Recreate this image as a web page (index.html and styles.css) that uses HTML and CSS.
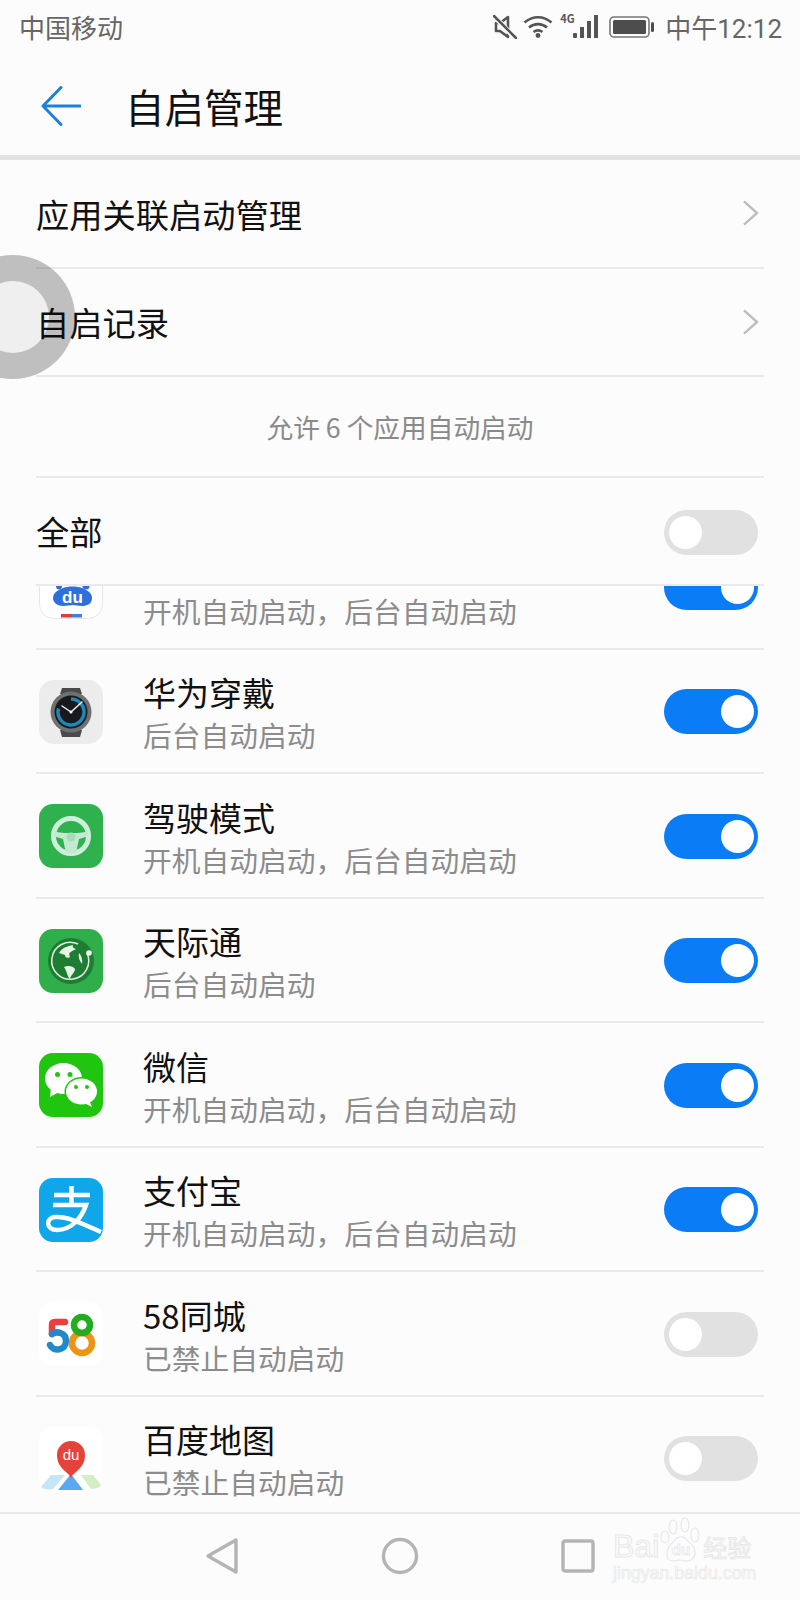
FILE: index.html
```html
<!DOCTYPE html>
<html lang="zh-CN">
<head>
    <meta charset="UTF-8">
    <title>自启管理</title>
    <link rel="stylesheet" href="styles.css">
</head>
<body>
    <div class="phone">
        <div class="status-bar">
            <span class="carrier">中国移动</span>
            <div class="status-icons">
                <svg class="icon-mute" viewBox="0 0 24 24" width="24" height="24">
                    <path d="M3 8h4l8-6v20l-8-6H3z" fill="none" stroke="#555" stroke-width="2.6" stroke-linejoin="round"/>
                    <path d="M2 2l20 21" stroke="#fdfdfd" stroke-width="5"/>
                    <path d="M1 1l22 22" stroke="#555" stroke-width="2.6" stroke-linecap="round"/>
                </svg>
                <svg class="icon-wifi" viewBox="0 0 30 23" width="30" height="23">
                    <path d="M1.5 7.5c8-7 19-7 27 0M6 12.5c5.500-4.500 12.500-4.500 18 0M10.500 17c2.800-2 6.200-2 9 0" fill="none" stroke="#555" stroke-width="2.6"/>
                    <circle cx="15" cy="20.500" r="2.400" fill="#555"/>
                </svg>
                <div class="signal">
                    <span class="net">4G</span>
                    <svg viewBox="0 0 26 23" width="26" height="23">
                        <rect x="0" y="18" width="4" height="5" rx="1" fill="#555"/>
                        <rect x="7" y="12" width="4" height="11" fill="#555"/>
                        <rect x="14" y="6" width="4" height="17" fill="#555"/>
                        <rect x="21" y="0" width="4" height="23" fill="#555"/>
                    </svg>
                </div>
                <svg class="icon-battery" viewBox="0 0 46 22" width="46" height="22">
                    <rect x="1" y="1" width="39" height="20" rx="4" fill="none" stroke="#777" stroke-width="1.600"/>
                    <rect x="4" y="4" width="33" height="14" rx="1.500" fill="#4d4d4d"/>
                    <rect x="42" y="6" width="3" height="10" rx="1.500" fill="#4d4d4d"/>
                </svg>
                <span class="clock">中午12:12</span>
            </div>
        </div>

        <header class="toolbar">
            <svg class="back" viewBox="0 0 40 40" width="40" height="40">
                <path d="M20 1.500L2 20l18 18.500M2 20h37" fill="none" stroke="#1f80d8" stroke-width="3" stroke-linecap="round" stroke-linejoin="round"/>
            </svg>
            <h1>自启管理</h1>
        </header>

        <div class="section">
            <div class="link-row">
                <span>应用关联启动管理</span>
                <svg class="chevron" viewBox="0 0 18 28" width="17" height="26"><path d="M2 1.500L16 14 2 26.500" fill="none" stroke="#bdbdbd" stroke-width="2.600"/></svg>
            </div>
            <div class="link-row">
                <span>自启记录</span>
                <svg class="chevron" viewBox="0 0 18 28" width="17" height="26"><path d="M2 1.500L16 14 2 26.500" fill="none" stroke="#bdbdbd" stroke-width="2.600"/></svg>
            </div>
            <div class="notice">允许 6 个应用自动启动</div>
            <div class="link-row">
                <span>全部</span>
                <div class="toggle"></div>
            </div>
        </div>

        <div class="app-viewport">
            <div class="app-list">
                <div class="app-row">
                    <svg class="app-icon" viewBox="0 0 64 64">
                        <rect x="0.500" y="0.500" width="63" height="63" rx="14" fill="#fff" stroke="#e6e6e6"/>
                        <ellipse cx="20" cy="31" rx="3" ry="3.500" fill="#2f6fdc"/>
                        <ellipse cx="47" cy="31" rx="3.500" ry="3.500" fill="#2f6fdc"/>
                        <path d="M14 43c0-6 6-8 10-10 5-2 14-2 19 0 4 2 10 4 10 10 0 6-5 8-10 8-4 0-7-1-9-1s-6 1-10 1c-5 0-10-3-10-8z" fill="#2f6fdc"/>
                        <text x="33.500" y="48" class="du-text">du</text>
                        <rect x="22" y="59" width="11" height="3.500" fill="#e0393e"/>
                        <rect x="33" y="59" width="10" height="3.500" fill="#3f7fe0"/>
                    </svg>
                    <div class="app-text"><div class="app-name"></div><div class="app-desc">开机自动启动，后台自动启动</div></div>
                    <div class="toggle on"></div>
                </div>
                <div class="app-row">
                    <svg class="app-icon" viewBox="0 0 64 64">
                        <rect width="64" height="64" rx="15" fill="#ececec"/>
                        <path d="M21 14l2-6h18l2 6zM21 50l2 7h18l2-7z" fill="#4a4a4a"/>
                        <circle cx="32" cy="32" r="20.500" fill="#6f7072"/>
                        <circle cx="32" cy="32" r="16.500" fill="#17191c"/>
                        <path d="M32 19a13 13 0 1 1-12.500 9.500" fill="none" stroke="#1e88b8" stroke-width="3.500"/>
                        <path d="M32 32l-9-6M32 32l11-10" stroke="#f2f2f2" stroke-width="1.500" stroke-linecap="round"/>
                        <circle cx="32" cy="32" r="1.500" fill="#fff"/>
                    </svg>
                    <div class="app-text"><div class="app-name">华为穿戴</div><div class="app-desc">后台自动启动</div></div>
                    <div class="toggle on"></div>
                </div>
                <div class="app-row">
                    <svg class="app-icon" viewBox="0 0 64 64">
                        <rect width="64" height="64" rx="14" fill="#2fb24d"/>
                        <circle cx="32" cy="32" r="17.500" fill="none" stroke="#cdeedb" stroke-width="5"/>
                        <path d="M15 27c6 2 10 2 17 2s11 0 17-2l1 5-10 3-3 14h-10l-3-14-10-3z" fill="#c3ead1"/>
                        <circle cx="32" cy="33" r="4.500" fill="#a7dcb8"/>
                    </svg>
                    <div class="app-text"><div class="app-name">驾驶模式</div><div class="app-desc">开机自动启动，后台自动启动</div></div>
                    <div class="toggle on"></div>
                </div>
                <div class="app-row">
                    <svg class="app-icon" viewBox="0 0 64 64">
                        <rect width="64" height="64" rx="14" fill="#2fae4a"/>
                        <circle cx="32" cy="32" r="23" fill="#1f7d33"/>
                        <path d="M48 24a18.500 18.500 0 1 1-9-9" fill="none" stroke="#d9f0dd" stroke-width="1.500"/>
                        <circle cx="50" cy="24" r="2.800" fill="#eef8ef"/>
                        <path d="M20 24c3-5 8-7 14-8-1 3 1 3 3 4-2 2-4 1-5 3-2 0-2 3-1 5-3 2-5 0-5-2-2-1-4-1-6-2zM25 38c4-2 9-1 11 2 0 4-4 5-5 10-3-3-3-8-6-12zM40 24c2 2 4 7 3 11-2-3-4-6-3-11z" fill="#e6f5e6"/>
                    </svg>
                    <div class="app-text"><div class="app-name">天际通</div><div class="app-desc">后台自动启动</div></div>
                    <div class="toggle on"></div>
                </div>
                <div class="app-row">
                    <svg class="app-icon" viewBox="0 0 64 64">
                        <rect width="64" height="64" rx="14" fill="#1fc50f"/>
                        <ellipse cx="24.500" cy="25.500" rx="18.500" ry="15.500" fill="#fff"/>
                        <path d="M12 35l-1 9 9-5z" fill="#fff"/>
                        <ellipse cx="42.500" cy="38.500" rx="17" ry="14.500" fill="#1fc50f"/>
                        <ellipse cx="42.500" cy="38.500" rx="15.500" ry="13" fill="#fff"/>
                        <path d="M50 47l3 7-8-4z" fill="#fff"/>
                        <circle cx="18.500" cy="21.500" r="2.500" fill="#1fc50f"/>
                        <circle cx="31" cy="21.500" r="2.500" fill="#1fc50f"/>
                        <circle cx="37" cy="34" r="2" fill="#1fc50f"/>
                        <circle cx="48" cy="34" r="2" fill="#1fc50f"/>
                    </svg>
                    <div class="app-text"><div class="app-name">微信</div><div class="app-desc">开机自动启动，后台自动启动</div></div>
                    <div class="toggle on"></div>
                </div>
                <div class="app-row">
                    <svg class="app-icon" viewBox="0 0 64 64">
                        <rect width="64" height="64" rx="14" fill="#10a6ea"/>
                        <path d="M15 17h36M32.500 8v19M14 27h33c-4 12-14 25-29 25-11 0-12-12-2-13 12-1 26 6 46 15" fill="none" stroke="#fff" stroke-width="4.500"/>
                    </svg>
                    <div class="app-text"><div class="app-name">支付宝</div><div class="app-desc">开机自动启动，后台自动启动</div></div>
                    <div class="toggle on"></div>
                </div>
                <div class="app-row">
                    <svg class="app-icon" viewBox="0 0 64 64">
                        <rect width="64" height="64" rx="14" fill="#fff"/>
                        <path d="M26 20h-10c-2 0-3 1-3 3v9" fill="none" stroke="#ea3f3f" stroke-width="6.500" stroke-linecap="round"/>
                        <path d="M13 32c4-3 14-2 14 7 0 10-13 11-16 4" fill="none" stroke="#2288cc" stroke-width="6.500" stroke-linecap="round"/>
                        <circle cx="43" cy="41" r="10" fill="none" stroke="#ee9314" stroke-width="6.500"/>
                        <circle cx="43" cy="23" r="8" fill="none" stroke="#22ac1e" stroke-width="6.500"/>
                    </svg>
                    <div class="app-text"><div class="app-name">58同城</div><div class="app-desc">已禁止自动启动</div></div>
                    <div class="toggle"></div>
                </div>
                <div class="app-row">
                    <svg class="app-icon" viewBox="0 0 64 64">
                        <rect width="64" height="64" rx="14" fill="#fff"/>
                        <path d="M2 60l10-12h14l-12 14c-5 1-10 0-12-2z" fill="#c5e6f8"/>
                        <path d="M62 58l-8-10H42l10 14c4 0 8-1 10-4z" fill="#d3eec0"/>
                        <path d="M32 47L19 63h25z" fill="#5aa8f0"/>
                        <path d="M32 51c-2-6-14-9-14-23a14 14 0 0 1 28 0c0 14-12 17-14 23z" fill="#e4433a"/>
                        <text x="32" y="33" class="map-text">du</text>
                    </svg>
                    <div class="app-text"><div class="app-name">百度地图</div><div class="app-desc">已禁止自动启动</div></div>
                    <div class="toggle"></div>
                </div>
            </div>
        </div>

        <nav class="nav-bar">
            <svg viewBox="0 0 34 38" width="34" height="38"><path d="M31 3v32L3 19z" fill="none" stroke="#b4b4b4" stroke-width="3.400" stroke-linejoin="round"/></svg>
            <svg viewBox="0 0 38 38" width="38" height="38"><circle cx="19" cy="19" r="16.500" fill="none" stroke="#b4b4b4" stroke-width="3.400"/></svg>
            <svg viewBox="0 0 34 34" width="34" height="34"><rect x="2" y="2" width="30" height="30" rx="2" fill="none" stroke="#b4b4b4" stroke-width="3.400"/></svg>
        </nav>

        <div class="watermark">
            <div class="wm-top">
                <span class="wm-bai">Bai</span>
                <svg viewBox="0 0 42 46" width="42" height="46">
                    <g fill="none" stroke="#e8e8e8" stroke-width="1.200">
                        <ellipse cx="14" cy="10" rx="4" ry="7"/>
                        <ellipse cx="26" cy="8" rx="4" ry="7"/>
                        <ellipse cx="6" cy="20" rx="4" ry="6"/>
                        <ellipse cx="36" cy="18" rx="4" ry="7"/>
                        <path d="M8 36c0-8 6-10 9-14 3-3 7-3 10 0 3 4 9 6 9 14 0 6-5 8-9 8-3 0-4-1-6-1s-4 1-7 1c-4 0-6-3-6-8z"/>
                    </g>
                    <text x="22" y="38" class="wm-du">du</text>
                </svg>
                <span class="wm-cn">经验</span>
            </div>
            <div class="wm-url">jingyan.baidu.com</div>
        </div>

        <div class="touch-ring"></div>
    </div>
</body>
</html>
```

FILE: styles.css
```css
body {
    margin: 0;
    background: #fff;
    font-family: "Noto Sans CJK SC", "Noto Sans", sans-serif;
    color: #111;
}

.phone {
    position: relative;
    width: 800px;
    height: 1600px;
    overflow: hidden;
    background: #fcfcfc;
}

/* Status bar */
.status-bar {
    display: flex;
    justify-content: space-between;
    align-items: center;
    box-sizing: border-box;
    height: 56px;
    padding: 0 18px 3px 19px;
    font-size: 26px;
    color: #666;
}

.status-icons {
    display: flex;
    align-items: center;
    gap: 6px;
}

.signal {
    position: relative;
    display: flex;
    margin-left: 14px;
}

.net {
    position: absolute;
    left: -13px;
    top: -3px;
    font-size: 11px;
    line-height: 12px;
    font-weight: bold;
    color: #555;
}

.icon-battery {
    margin-left: 4px;
}

.clock {
    margin-left: 4px;
    font-family: Roboto, "Noto Sans CJK SC", sans-serif;
}

/* Toolbar */
.toolbar {
    display: flex;
    align-items: center;
    height: 99px;
    padding-left: 41px;
    border-bottom: 5px solid #e2e2e2;
}

.toolbar h1 {
    margin: 0 0 0 44px;
    font-size: 39.500px;
    font-weight: normal;
}

/* Top rows */
.section {
    padding: 0 36px;
}

.link-row {
    display: flex;
    justify-content: space-between;
    align-items: center;
    box-sizing: border-box;
    height: 108.500px;
    padding-right: 5px;
    font-size: 33.250px;
    border-bottom: 2px solid #eaeaea;
}

.section .link-row:last-child {
    padding-right: 6px;
}

.section .toggle {
    margin-top: 3px;
}

.notice {
    display: flex;
    justify-content: center;
    align-items: center;
    box-sizing: border-box;
    height: 100.500px;
    font-size: 26.700px;
    color: #8a8a8a;
    border-bottom: 2px solid #eaeaea;
}

/* Toggle */
.toggle {
    position: relative;
    flex: none;
    width: 94px;
    height: 45px;
    border-radius: 23px;
    background: #e1e1e1;
}

.toggle::after {
    content: "";
    position: absolute;
    top: 6px;
    left: 5px;
    width: 33px;
    height: 33px;
    border-radius: 50%;
    background: #fff;
}

.toggle.on {
    background: #0a7cf5;
}

.toggle.on::after {
    left: auto;
    right: 4px;
}

/* App list */
.app-viewport {
    height: 926px;
    margin: 0 36px;
    overflow: hidden;
}

.app-list {
    margin-top: -61px;
    padding-right: 6px;
}

.app-row {
    display: flex;
    align-items: center;
    box-sizing: border-box;
    height: 124.500px;
    margin-right: -6px;
    padding: 2px 6px 0 3px;
    border-bottom: 2px solid #eaeaea;
}

.app-icon {
    flex: none;
    width: 64px;
    height: 64px;
}

.app-text {
    flex: 1;
    margin-left: 40px;
    padding-top: 4px;
}

.app-name {
    height: 43px;
    font-size: 33px;
    line-height: 43px;
}

.app-desc {
    font-size: 28.750px;
    line-height: 42px;
    color: #8c8c8c;
}

.du-text {
    font: bold 17px "Liberation Sans", sans-serif;
    fill: #fff;
    text-anchor: middle;
}

.map-text {
    font: 15px "Liberation Sans", sans-serif;
    fill: #fff;
    text-anchor: middle;
}

/* Navigation bar */
.nav-bar {
    display: flex;
    align-items: center;
    box-sizing: border-box;
    height: 88px;
    padding: 0 0 3px 205px;
    gap: 142px;
    border-top: 2px solid #e8e8e8;
}

/* Overlays */
.watermark {
    position: absolute;
    left: 613px;
    top: 1515px;
    width: 142px;
}

.wm-top {
    display: flex;
    align-items: flex-end;
    height: 48px;
}

.wm-bai {
    font: 32px/34px "Liberation Sans", sans-serif;
    color: transparent;
    -webkit-text-stroke: 1px #e8e8e8;
}

.wm-cn {
    margin-left: 2px;
    font-size: 24px;
    line-height: 32px;
    color: transparent;
    -webkit-text-stroke: 1px #e8e8e8;
}

.wm-du {
    font: bold 15px "Liberation Sans", sans-serif;
    fill: none;
    stroke: #e8e8e8;
    stroke-width: 0.800;
    text-anchor: middle;
}

.wm-url {
    font: 17.800px/20px "Liberation Sans", sans-serif;
    color: transparent;
    -webkit-text-stroke: 0.700px #e8e8e8;
    white-space: nowrap;
}

.touch-ring {
    position: absolute;
    left: -49px;
    top: 255px;
    box-sizing: border-box;
    width: 124px;
    height: 124px;
    border: 26px solid rgba(0, 0, 0, 0.2);
    border-radius: 50%;
    background: rgba(0, 0, 0, 0.05);
}
```
